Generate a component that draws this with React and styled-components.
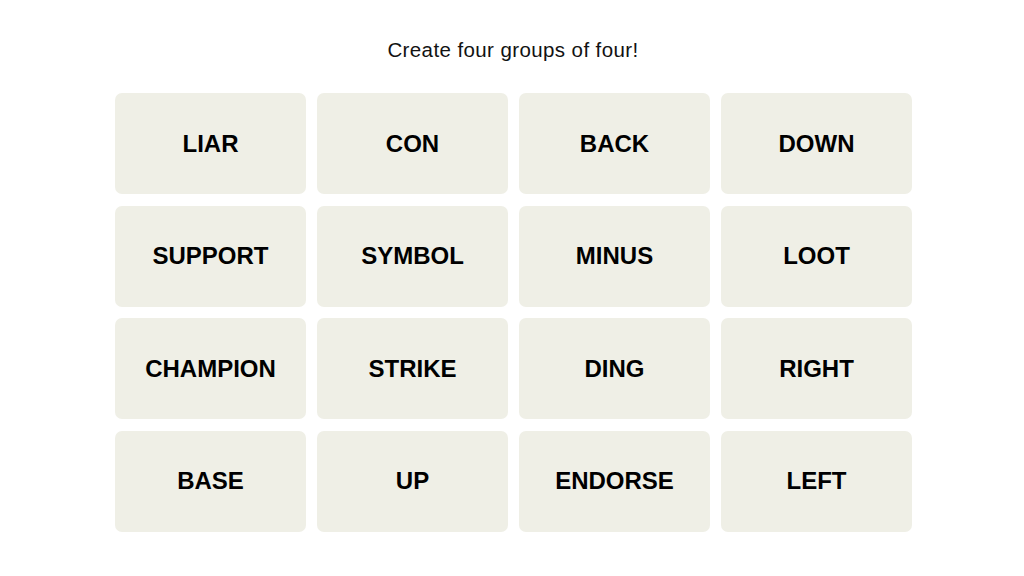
import React from "react";
import styled, { createGlobalStyle } from "styled-components";

const GlobalStyle = createGlobalStyle`
  html, body {
    margin: 0;
    padding: 0;
    background: #ffffff;
  }
  body {
    font-family: "Liberation Sans", Arial, sans-serif;
    color: #000000;
  }
`;

const words = [
  "LIAR", "CON", "BACK", "DOWN",
  "SUPPORT", "SYMBOL", "MINUS", "LOOT",
  "CHAMPION", "STRIKE", "DING", "RIGHT",
  "BASE", "UP", "ENDORSE", "LEFT",
];

const Page = styled.main`
  width: 1024px;
  height: 576px;
  display: flex;
  flex-direction: column;
  align-items: center;
  padding-top: 37px;
  box-sizing: border-box;
`;

const Prompt = styled.p`
  margin: 0 0 30px 2px;
  font-size: 20.5px;
  line-height: 26px;
  letter-spacing: 0.4px;
  color: #121212;
`;

const Board = styled.div`
  display: grid;
  grid-template-columns: repeat(4, 191px);
  grid-auto-rows: 101px;
  column-gap: 11px;
  row-gap: 11.5px;
  margin-left: 3px;
`;

const Tile = styled.button`
  border: none;
  border-radius: 7px;
  background: #efefe6;
  font-family: "Liberation Sans", Arial, sans-serif;
  font-weight: 700;
  font-size: 24px;
  color: #000000;
  text-transform: uppercase;
  display: flex;
  align-items: center;
  justify-content: center;
  padding: 0;
  cursor: pointer;
`;

export default function App() {
  return (
    <>
      <GlobalStyle />
      <Page>
        <Prompt>Create four groups of four!</Prompt>
        <Board>
          {words.map((w) => (
            <Tile key={w}>{w}</Tile>
          ))}
        </Board>
      </Page>
    </>
  );
}
